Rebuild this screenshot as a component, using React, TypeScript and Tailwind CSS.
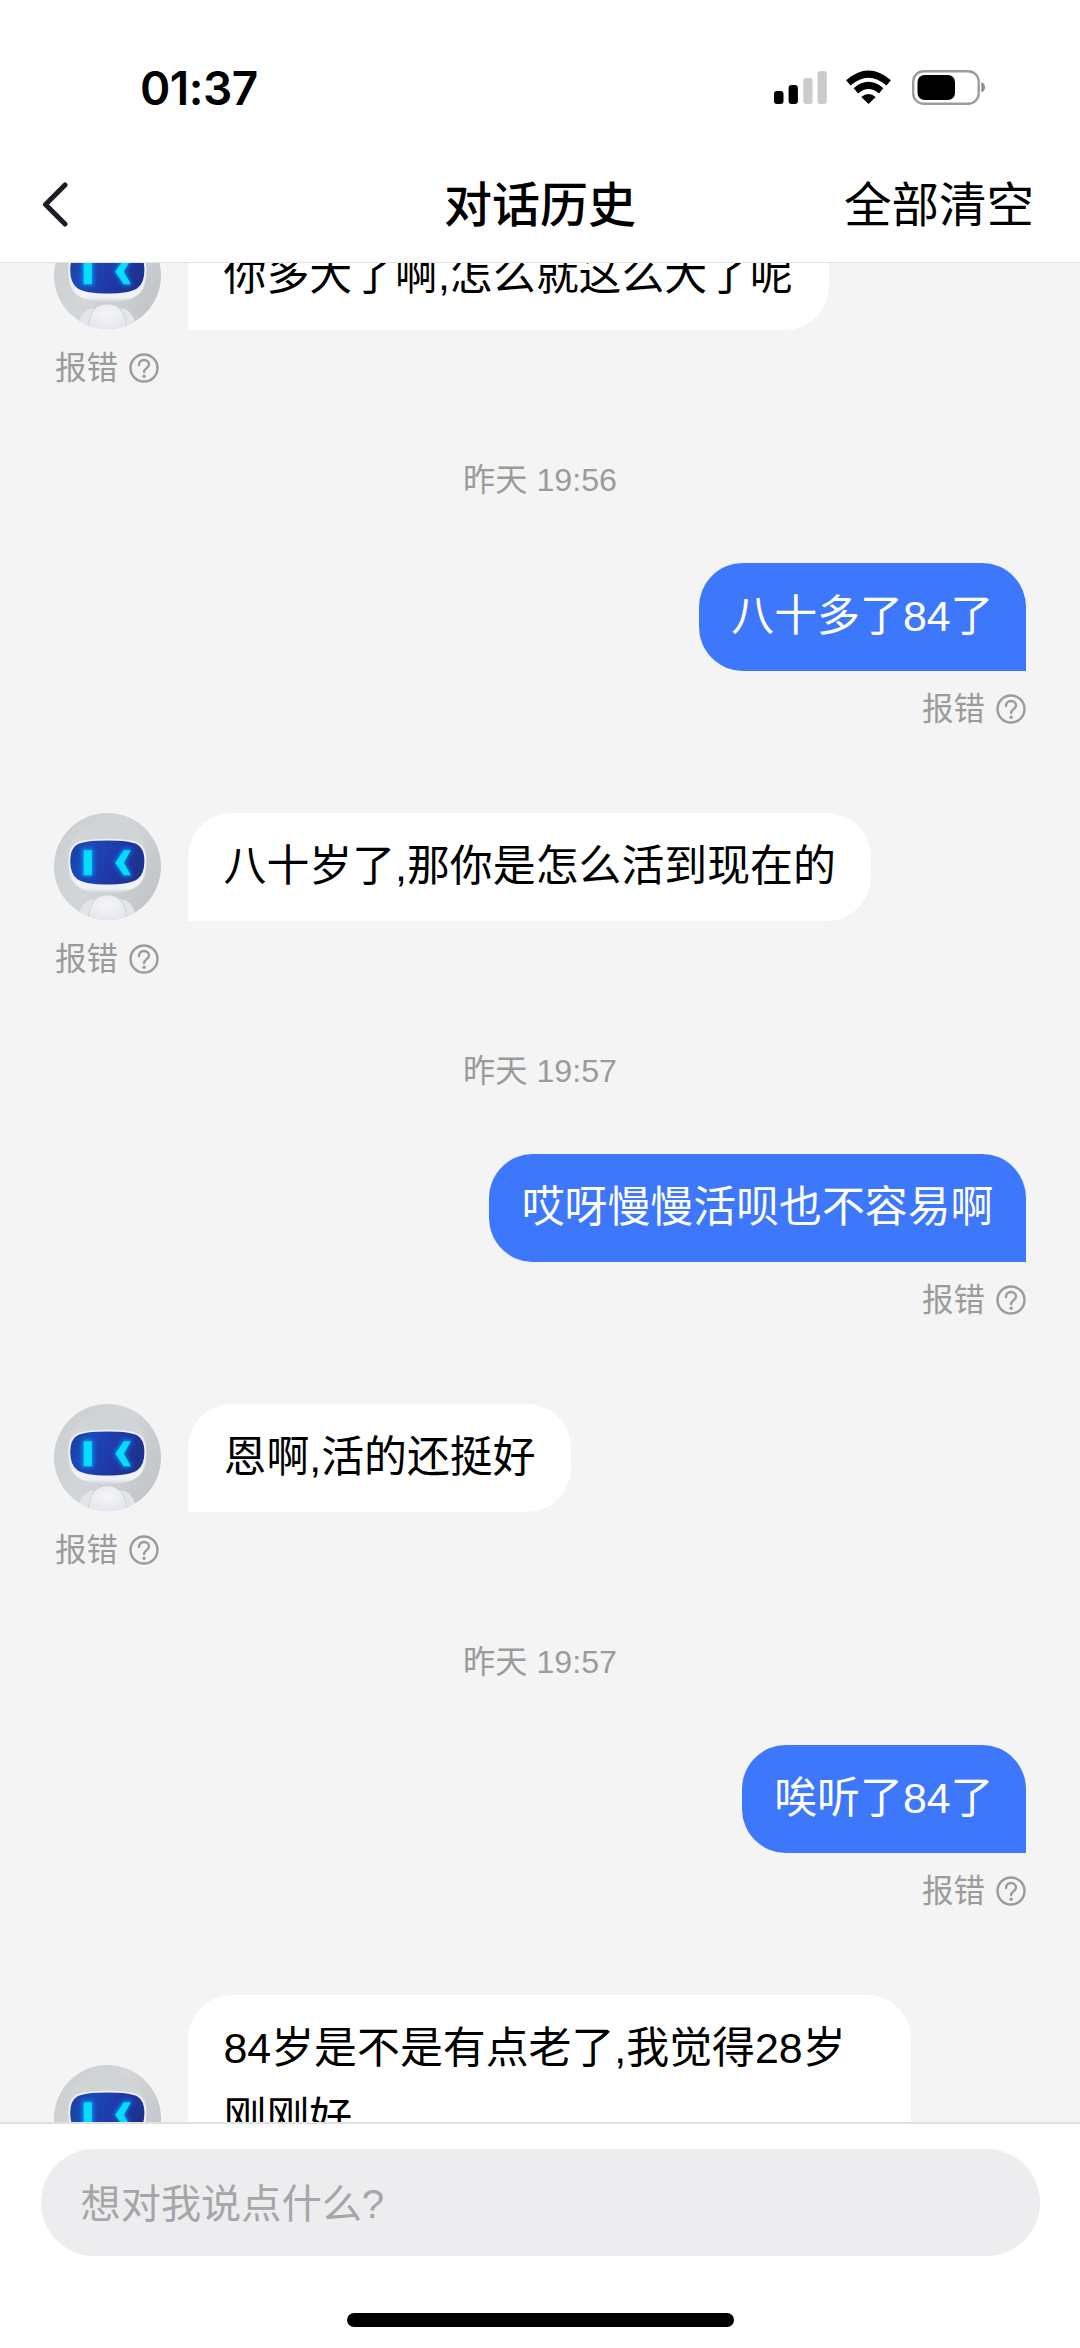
import { ReactNode } from "react";
import clsx from "clsx";

interface Message {
  id: number;
  from: "bot" | "user";
  text: string;
  time?: string;
}

const messages: Message[] = [
  { id: 1, from: "bot", text: "你多大了啊,怎么就这么大了呢" },
  { id: 2, from: "user", text: "八十多了84了", time: "昨天 19:56" },
  { id: 3, from: "bot", text: "八十岁了,那你是怎么活到现在的" },
  { id: 4, from: "user", text: "哎呀慢慢活呗也不容易啊", time: "昨天 19:57" },
  { id: 5, from: "bot", text: "恩啊,活的还挺好" },
  { id: 6, from: "user", text: "唉听了84了", time: "昨天 19:57" },
  { id: 7, from: "bot", text: "84岁是不是有点老了,我觉得28岁刚刚好" },
];

const StatusBar = () => (
  <div className="flex h-[146px] items-start justify-between pl-[140px] pr-[94px] pt-[70px]">
    <span className="font-['Inter'] text-[46px] font-semibold leading-[36px] tracking-[-0.5px]">
      01:37
    </span>
    <div className="flex items-start">
      <svg width="53" height="35" viewBox="0 0 53 35">
        <rect x="0" y="21" width="9.5" height="13" rx="3" />
        <rect x="14.6" y="15" width="9.3" height="19" rx="3" />
        <rect x="29.3" y="8" width="9.3" height="26" rx="3" fill="#cbcbcb" />
        <rect x="43.5" y="1" width="9.3" height="33" rx="3" fill="#cbcbcb" />
      </svg>
      <svg className="ml-[19px] mr-px" width="45" height="35" viewBox="0 0 45 35">
        <path d="M22.5 34 L15.3 27 Q22.5 20.8 29.7 27 Z" />
        <path
          d="M9.9 20.8 Q22.5 10 35.1 20.8"
          fill="none"
          stroke="#000"
          strokeWidth="6.8"
        />
        <path
          d="M2.3 12.9 Q22.5 -4.6 42.7 12.9"
          fill="none"
          stroke="#000"
          strokeWidth="6.8"
        />
      </svg>
      <svg className="ml-5" width="74" height="35" viewBox="0 0 74 35">
        <rect
          x="1.2"
          y="1.2"
          width="65.5"
          height="32.6"
          rx="10.5"
          fill="none"
          stroke="#9c9c9c"
          strokeWidth="2.4"
        />
        <rect x="5.5" y="5" width="37.5" height="25" rx="7" />
        <path d="M69.3 12 Q73 13.5 73 17.3 Q73 21 69.3 22.6 Z" fill="#8c8c8c" />
      </svg>
    </div>
  </div>
);

const Header = () => (
  <header className="flex h-[117px] items-center justify-between border-b border-[#e3e3e3] pl-[42px] pr-[46px]">
    <div className="flex w-[190px]">
      <svg width="30" height="46" viewBox="0 0 30 46">
        <path
          d="M23 4 L3.5 23.5 L23 43"
          fill="none"
          stroke="#1d1b26"
          strokeWidth="5"
          strokeLinecap="round"
          strokeLinejoin="round"
        />
      </svg>
    </div>
    <h1 className="pl-1 pt-[3px] text-[48px] font-medium leading-[60px]">
      对话历史
    </h1>
    <button className="w-[190px] whitespace-nowrap pt-[3px] text-right text-[47.5px] leading-[60px]">
      全部清空
    </button>
  </header>
);

const Avatar = () => (
  <svg
    className="mb-px mr-[27px] size-[107px] shrink-0 self-end"
    viewBox="0 0 107 107"
  >
    <defs>
      <linearGradient id="bg" x1="0" y1="0.2" x2="1" y2="0.8">
        <stop offset="0" stopColor="#cccfd2" />
        <stop offset="0.45" stopColor="#d3d6d8" />
        <stop offset="1" stopColor="#bfc4c7" />
      </linearGradient>
      <linearGradient id="head" x1="0" y1="0" x2="0" y2="1">
        <stop offset="0" stopColor="#cfd3d5" />
        <stop offset="0.6" stopColor="#d3d8dc" />
        <stop offset="0.85" stopColor="#f3f4fa" />
        <stop offset="0.93" stopColor="#eef0f6" />
        <stop offset="1" stopColor="#ccd1d6" />
      </linearGradient>
      <linearGradient id="visor" x1="0" y1="0" x2="1" y2="0.3">
        <stop offset="0" stopColor="#1f3f96" />
        <stop offset="0.3" stopColor="#1a49b8" />
        <stop offset="0.7" stopColor="#2038a6" />
        <stop offset="1" stopColor="#1e3290" />
      </linearGradient>
      <radialGradient id="body" cx="0.5" cy="0.4" r="0.8">
        <stop offset="0" stopColor="#f5f5fa" />
        <stop offset="1" stopColor="#e0e3ea" />
      </radialGradient>
      <filter id="glow" x="-60%" y="-30%" width="220%" height="160%">
        <feGaussianBlur stdDeviation="2.2" />
      </filter>
      <clipPath id="round">
        <circle cx="53.5" cy="53.5" r="53.5" />
      </clipPath>
    </defs>
    <g clipPath="url(#round)">
      <rect width="107" height="107" fill="url(#bg)" />
      <path
        d="M14 48 C14 20 33 8 54 8 C75 8 92.5 20 92.5 48 C92.5 68 86 80 53.5 80.5 C21 80 14 68 14 48 Z"
        fill="url(#head)"
      />
      <path
        d="M23 107 C25 96 30 88 38 86.5 L69 86.5 C77 88 81 97 83 107 Z"
        fill="#e2e6ea"
      />
      <path
        d="M34 107 C35 90 42 82.5 53.5 82.5 C65 82.5 72 90 73 107 Z"
        fill="url(#body)"
      />
      <path
        d="M34 107 C35 96 38 89 42 86 M73 107 C72 96 69 89 65 86"
        fill="none"
        stroke="#ccd2d8"
        strokeWidth="1"
      />
      <path
        d="M15.3 48 C15.3 31.5 20.5 26.6 53.5 26.6 C86 26.6 91.3 31.5 91.3 48 C91.3 66 84 72.3 53.5 72.3 C23 72.3 15.3 66 15.3 48 Z"
        fill="url(#visor)"
        stroke="#f1f3fb"
        strokeWidth="1.8"
      />
      <g fill="#0a8cf5" filter="url(#glow)">
        <rect x="28" y="35.5" width="11.5" height="28" />
        <path d="M69 35.5 H78 L71 49.7 L78 63.5 H69 L60 49.7 Z" />
      </g>
      <g fill="#06dcfb">
        <rect x="29.7" y="37.2" width="8.2" height="25" rx="0.8" />
        <path d="M69.8 37.2 H76.8 L69.8 49.7 L76.8 62.2 H69.8 L61.3 49.7 Z" />
      </g>
    </g>
  </svg>
);

const ReportLink = ({ right }: { right?: boolean }) => (
  <div
    className={clsx(
      "mt-4 flex h-[44px] items-center gap-[11px] text-[31.5px] leading-[44px] text-[#9b9b9b]",
      right ? "justify-end" : "pl-[1px]"
    )}
  >
    <span>报错</span>
    <svg width="30" height="30" viewBox="0 0 30 30" fill="none">
      <circle cx="15" cy="15" r="13.5" stroke="#9b9b9b" strokeWidth="2.4" />
      <path
        d="M10 12 C10 9 12.1 7 15 7 C17.9 7 20 8.9 20 11.5 C20 15 15.1 15.2 15.1 19"
        stroke="#9b9b9b"
        strokeWidth="2.4"
        strokeLinecap="round"
      />
      <circle cx="15.1" cy="23.2" r="1.7" fill="#9b9b9b" />
    </svg>
  </div>
);

const Bubble = ({ user, children }: { user?: boolean; children: ReactNode }) => (
  <div
    className={clsx(
      "max-w-[723px] rounded-[44px] pb-[20px] pt-[18px] text-[42.9px] leading-[70px]",
      user
        ? "rounded-br-none bg-[#3d77fc] px-[32.5px] text-white"
        : "rounded-bl-none bg-white px-[35.5px] text-black"
    )}
  >
    {children}
  </div>
);

const MessageItem = ({ message }: { message: Message }) => {
  if (message.from === "user") {
    return (
      <li>
        <div className="mb-[59px] mt-[66px] h-[48px] text-center text-[32.2px] leading-[48px] text-[#9b9b9b]">
          {message.time}
        </div>
        <div className="flex justify-end">
          <Bubble user>{message.text}</Bubble>
        </div>
        <ReportLink right />
      </li>
    );
  }

  return (
    <li className="mt-[82px] first:mt-0">
      <div className="flex">
        <Avatar />
        <Bubble>{message.text}</Bubble>
      </div>
      {message.id !== messages.length && <ReportLink />}
    </li>
  );
};

export default function App() {
  return (
    <div className="flex h-[2348px] w-[1080px] flex-col bg-white font-['Liberation_Sans','Noto_Sans_CJK_SC',sans-serif] text-black">
      <StatusBar />
      <Header />
      <main className="h-[1859px] shrink-0 overflow-hidden bg-[#f4f4f4] px-[54px]">
        {/* scrolled part way through the first message */}
        <ul className="-mt-[41px]">
          {messages.map((message) => (
            <MessageItem key={message.id} message={message} />
          ))}
        </ul>
      </main>
      <footer className="flex h-[226px] flex-col items-center justify-between border-t-2 border-[#e0e0e0] pb-[21px] pt-[25px]">
        <div className="flex h-[107px] w-[999px] items-center rounded-full bg-[#ededef] px-[40px] pt-[5px] text-[40.2px] text-[#a6a6a8]">
          想对我说点什么?
        </div>
        <div className="h-[14px] w-[387px] rounded-full bg-black" />
      </footer>
    </div>
  );
}
